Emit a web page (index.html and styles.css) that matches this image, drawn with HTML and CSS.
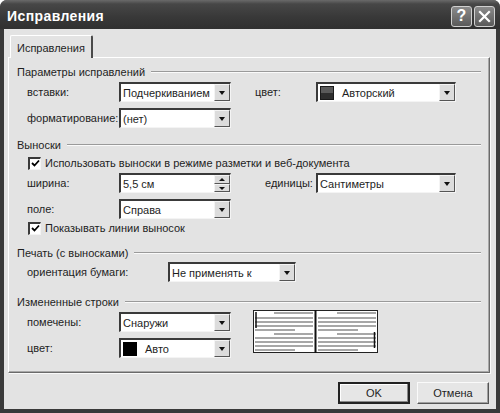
FILE: index.html
```html
<!DOCTYPE html>
<html lang="ru">
<head>
    <meta charset="UTF-8">
    <title>Исправления</title>
    <link rel="stylesheet" href="styles.css">
</head>
<body>
    <div class="window">
        <div class="titlebar">
            <span class="title">Исправления</span>
            <div class="title-buttons">
                <span class="tbtn tbtn-help">?</span>
                <span class="tbtn">
                    <svg width="13" height="13" viewBox="0 0 13 13"><path d="M2 2 L11 11 M11 2 L2 11" stroke="#fff" stroke-width="2.2" stroke-linecap="square"/></svg>
                </span>
            </div>
        </div>

        <div class="client">
            <div class="tabs">
                <div class="tab">Исправления</div>
            </div>
            <div class="panel">
                <div class="group-title g1"><span>Параметры исправлений</span></div>
                <div class="row r1">
                    <span class="label">вставки:</span>
                    <div class="combo w112"><span class="combo-text">Подчеркиванием</span><span class="combo-btn"></span></div>
                    <span class="label2 l-color">цвет:</span>
                    <div class="combo w140"><span class="swatch swatch-gray"></span><span class="combo-text">Авторский</span><span class="combo-btn"></span></div>
                </div>
                <div class="row r2">
                    <span class="label">форматирование:</span>
                    <div class="combo w112"><span class="combo-text">(нет)</span><span class="combo-btn"></span></div>
                </div>

                <div class="group-title g2"><span>Выноски</span></div>
                <label class="check c1"><span class="box"><svg width="9" height="9" viewBox="0 0 9 9"><path d="M1 4 L3.5 6.5 L8 1.5" stroke="#000" stroke-width="1.8" fill="none"/></svg></span>Использовать выноски в режиме разметки и веб-документа</label>
                <div class="row r3">
                    <span class="label">ширина:</span>
                    <div class="combo w112"><span class="combo-text">5,5 см</span><span class="spin"><span class="spin-up"></span><span class="spin-down"></span></span></div>
                    <span class="label2 l-units">единицы:</span>
                    <div class="combo w140"><span class="combo-text">Сантиметры</span><span class="combo-btn"></span></div>
                </div>
                <div class="row r4">
                    <span class="label">поле:</span>
                    <div class="combo w112"><span class="combo-text">Справа</span><span class="combo-btn"></span></div>
                </div>
                <label class="check c2"><span class="box"><svg width="9" height="9" viewBox="0 0 9 9"><path d="M1 4 L3.5 6.5 L8 1.5" stroke="#000" stroke-width="1.8" fill="none"/></svg></span>Показывать линии выносок</label>

                <div class="group-title g3"><span>Печать (с выносками)</span></div>
                <div class="row r5">
                    <span class="label wide">ориентация бумаги:</span>
                    <div class="combo w128"><span class="combo-text">Не применять к</span><span class="combo-btn"></span></div>
                </div>

                <div class="group-title g4"><span>Измененные строки</span></div>
                <div class="lines-block">
                    <div class="lines-col">
                        <div class="row r6">
                            <span class="label">помечены:</span>
                            <div class="combo w112"><span class="combo-text">Снаружи</span><span class="combo-btn"></span></div>
                        </div>
                        <div class="row r7">
                            <span class="label">цвет:</span>
                            <div class="combo w112"><span class="swatch swatch-black"></span><span class="combo-text">Авто</span><span class="combo-btn"></span></div>
                        </div>
                    </div>
                    <svg class="preview" width="125" height="43" viewBox="0 0 125 43">
                        <rect x="0.5" y="0.5" width="124" height="42" fill="#fff" stroke="#222"/>
                        <line x1="62.5" y1="0" x2="62.5" y2="43" stroke="#111" stroke-width="2"/>
                        <g stroke="#8a8a8a" stroke-width="1.6">
                            <line x1="21" y1="3" x2="60" y2="3"/>
                            <line x1="2" y1="8" x2="60" y2="8"/>
                            <line x1="2" y1="12" x2="60" y2="12"/>
                            <line x1="2" y1="16" x2="60" y2="16"/>
                            <line x1="2" y1="20" x2="42" y2="20"/>
                            <line x1="21" y1="24" x2="60" y2="24"/>
                            <line x1="2" y1="28" x2="60" y2="28"/>
                            <line x1="2" y1="32" x2="60" y2="32"/>
                            <line x1="2" y1="36" x2="60" y2="36"/>
                            <line x1="2" y1="40" x2="42" y2="40"/>
                            <line x1="84" y1="3" x2="123" y2="3"/>
                            <line x1="65" y1="8" x2="123" y2="8"/>
                            <line x1="65" y1="12" x2="123" y2="12"/>
                            <line x1="65" y1="16" x2="123" y2="16"/>
                            <line x1="65" y1="20" x2="105" y2="20"/>
                            <line x1="84" y1="24" x2="123" y2="24"/>
                            <line x1="65" y1="28" x2="123" y2="28"/>
                            <line x1="65" y1="32" x2="123" y2="32"/>
                            <line x1="65" y1="36" x2="123" y2="36"/>
                            <line x1="65" y1="40" x2="105" y2="40"/>
                        </g>
                        <line x1="3" y1="2" x2="3" y2="18" stroke="#111" stroke-width="1.5"/>
                        <line x1="121.5" y1="22" x2="121.5" y2="38" stroke="#111" stroke-width="1.5"/>
                    </svg>
                </div>
            </div>

            <div class="buttons">
                <button class="btn btn-default">OK</button>
                <button class="btn">Отмена</button>
            </div>
        </div>
    </div>
</body>
</html>
```

FILE: styles.css
```css
body {
    margin: 0;
    font-family: "Liberation Sans", Arial, sans-serif;
    font-size: 11px;
    color: #1e1e1e;
    background: #fff;
}
.window {
    width: 500px;
    height: 413px;
    box-sizing: border-box;
    background: #3a3a3a;
    border-radius: 7px 7px 0 0;
    display: flex;
    flex-direction: column;
    overflow: hidden;
}
.titlebar {
    height: 29px;
    flex: none;
    display: flex;
    align-items: center;
    justify-content: space-between;
    padding: 0 5px 0 7px;
    background: linear-gradient(to bottom, #6a6a6a 0, #474747 4px, #383838 60%, #303030 100%);
}
.title {
    color: #fff;
    font-weight: bold;
    font-size: 14px;
    letter-spacing: 0.4px;
    margin-top: 2px;
}
.title-buttons {
    display: flex;
    gap: 2px;
    margin-top: 3px;
}
.tbtn {
    width: 19px;
    height: 19px;
    border: 1px solid #d0d0d0;
    border-radius: 3px;
    background: linear-gradient(to bottom, #8a8a8a, #5a5a5a);
    display: flex;
    align-items: center;
    justify-content: center;
    color: #fff;
    font-weight: bold;
    font-size: 16px;
}
.client {
    flex: 1;
    margin: 0 4px 4px 4px;
    background: #e3e3e3;
    padding: 6px 6px 0 4px;
    display: flex;
    flex-direction: column;
}
.tabs {
    display: flex;
    padding-left: 2px;
    height: 22px;
    position: relative;
    z-index: 1;
}
.tab {
    width: 83px;
    box-sizing: border-box;
    padding: 6px 0 0 6px;
    background: #e3e3e3;
    border-top: 1px solid #fff;
    border-left: 1px solid #fff;
    border-right: 2px solid #4a4a4a;
    border-radius: 2px 2px 0 0;
    height: 23px;
}
.panel {
    height: 316px;
    box-sizing: border-box;
    border-top: 1px solid #fff;
    border-left: 1px solid #fff;
    border-right: 1px solid #6a6a6a;
    border-bottom: 1px solid #6a6a6a;
    box-shadow: inset -1px -1px 0 #a8a8a8, 1px 1px 0 #fafafa;
    padding: 0 8px 0 8px;
}
.group-title {
    display: flex;
    align-items: center;
    height: 14px;
}
.group-title::after {
    content: "";
    flex: 1;
    margin-left: 6px;
    border-top: 1px solid #9a9a9a;
    border-bottom: 1px solid #fafafa;
}
.g1 { margin-top: 7px; }
.g2 { margin-top: 10px; }
.g3 { margin-top: 10px; }
.g4 { margin-top: 13px; }
.row {
    display: flex;
    align-items: center;
    height: 20px;
}
.r1 { margin-top: 3px; }
.r2 { margin-top: 6px; }
.r3 { margin-top: 2px; }
.r4 { margin-top: 6px; }
.r5 { margin-top: 2px; }
.r6 { margin-top: 3px; }
.r7 { margin-top: 6px; }
.label {
    width: 102px;
    padding-left: 10px;
    box-sizing: border-box;
    flex: none;
}
.label.wide {
    width: 151px;
}
.label2 {
    width: 85px;
    box-sizing: border-box;
    flex: none;
}
.l-color { padding-left: 24px; }
.l-units { padding-left: 34px; }
.combo {
    height: 20px;
    box-sizing: border-box;
    background: #fff;
    border-top: 2px solid #3a3a3a;
    border-left: 2px solid #3a3a3a;
    border-right: 1px solid #f4f4f4;
    border-bottom: 1px solid #f4f4f4;
    display: flex;
    align-items: center;
    flex: none;
}
.w112 { width: 112px; }
.w128 { width: 128px; }
.w140 { width: 140px; }
.combo-text {
    flex: 1;
    padding-left: 2px;
    white-space: nowrap;
    overflow: hidden;
}
.combo-btn {
    width: 16px;
    height: 17px;
    box-sizing: border-box;
    background: #dcdcdc;
    border-top: 1px solid #f4f4f4;
    border-left: 1px solid #f4f4f4;
    border-right: 1px solid #555;
    border-bottom: 1px solid #555;
    position: relative;
    flex: none;
}
.combo-btn::after {
    content: "";
    position: absolute;
    left: 4px;
    top: 6px;
    border-left: 3.5px solid transparent;
    border-right: 3.5px solid transparent;
    border-top: 4px solid #111;
}
.spin {
    width: 16px;
    height: 17px;
    display: flex;
    flex-direction: column;
    flex: none;
}
.spin-up, .spin-down {
    flex: 1;
    box-sizing: border-box;
    background: #dcdcdc;
    border-top: 1px solid #f4f4f4;
    border-left: 1px solid #f4f4f4;
    border-right: 1px solid #555;
    border-bottom: 1px solid #555;
    position: relative;
}
.spin-up::after, .spin-down::after {
    content: "";
    position: absolute;
    left: 4px;
    top: 2px;
    border-left: 3px solid transparent;
    border-right: 3px solid transparent;
}
.spin-up::after { border-bottom: 3px solid #111; }
.spin-down::after { border-top: 3px solid #111; }
.swatch {
    width: 14px;
    height: 14px;
    box-sizing: border-box;
    margin-left: 2px;
    margin-right: 6px;
    flex: none;
}
.swatch-gray {
    background: linear-gradient(to bottom, #5a5a5a 50%, #2e2e2e 50%);
    border: 1px solid #1a1a1a;
}
.swatch-black {
    background: #000;
}
.check {
    display: flex;
    align-items: center;
    height: 16px;
    padding-left: 11px;
}
.c1 { margin-top: 3px; }
.c2 { margin-top: 1px; }
.box {
    width: 13px;
    height: 13px;
    box-sizing: border-box;
    background: #fff;
    border-top: 2px solid #3a3a3a;
    border-left: 2px solid #3a3a3a;
    border-right: 1px solid #f4f4f4;
    border-bottom: 1px solid #f4f4f4;
    margin-right: 4px;
    display: flex;
    align-items: center;
    justify-content: center;
}
.lines-block {
    display: flex;
    align-items: flex-start;
}
.preview {
    margin-left: 22px;
    margin-top: 1px;
}
.buttons {
    display: flex;
    justify-content: flex-end;
    gap: 7px;
    margin-top: 9px;
    padding-right: 1px;
}
.btn {
    width: 72px;
    height: 22px;
    font-family: inherit;
    font-size: 11px;
    color: #1e1e1e;
    background: #e6e6e6;
    border: 1px solid #fafafa;
    border-right-color: #555;
    border-bottom-color: #555;
    box-shadow: inset -1px -1px 0 #a0a0a0;
}
.btn-default {
    border: 2px solid #222;
    box-shadow: inset -1px -1px 0 #888, inset 1px 1px 0 #fff;
}
```
